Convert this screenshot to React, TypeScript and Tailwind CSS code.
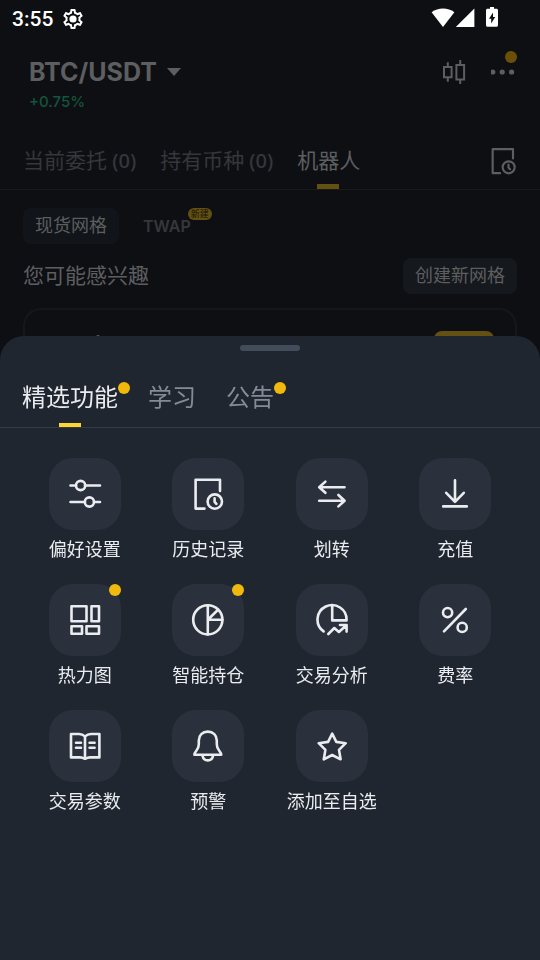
import { useState, type ReactNode } from 'react';

interface Feature {
  label: string;
  icon: ReactNode;
  isNew?: boolean;
}

interface SheetTab {
  label: string;
  isNew?: boolean;
}

interface OrderTab {
  label: string;
  count?: number;
}

function Glyph({ children, className = 'size-9' }: { children: ReactNode; className?: string }) {
  return (
    <svg
      viewBox="0 0 36 36"
      className={className}
      fill="none"
      stroke="currentColor"
      strokeWidth="2.6"
      strokeLinecap="round"
      strokeLinejoin="round"
      aria-hidden="true"
    >
      {children}
    </svg>
  );
}

const historyPaths = (
  <>
    <path d="M14.5 32.6H5.6V3.8H30V15" />
    <circle cx="24.8" cy="25.6" r="7.2" />
    <path d="M24.6 22.4v3.4l1.8 2" />
  </>
);

const features: Feature[] = [
  {
    label: '偏好设置',
    icon: (
      <>
        <path d="M3.5 9.5H9M18 9.5h15M3.5 26H18M27 26h6" />
        <circle cx="13.6" cy="9.5" r="4.6" />
        <circle cx="22.4" cy="26" r="4.6" />
      </>
    ),
  },
  { label: '历史记录', icon: historyPaths },
  {
    label: '划转',
    icon: <path d="M30.5 11.2H5.2M11.4 5.6l-6.2 5.6 6.2 5.6M5.2 24.7h25.3M24.4 19l6.2 5.7-6.2 5.7" />,
  },
  {
    label: '充值',
    icon: <path d="M18 4.2v21.6M9.2 16.8l8.8 9 8.8-9M6.2 30.4h23.6" />,
  },
  {
    label: '热力图',
    isNew: true,
    icon: <path d="M4.5 4.3h15v15h-15zM24.5 4.3H32v15h-7.5zM4.5 24.3H15v7.5H4.5zM19.5 24.3H32v7.5H19.5z" />,
  },
  {
    label: '智能持仓',
    isNew: true,
    icon: (
      <>
        <circle cx="17.8" cy="17.8" r="14.6" />
        <path d="M17.8 3.2v29.2M17.8 17.8h14.6M18.4 17.2l9.6-9.4" />
      </>
    ),
  },
  {
    label: '交易分析',
    icon: (
      <>
        <path d="M9.6 29.4A14.5 14.5 0 1 1 32.5 18.4H18.2V3.6" />
        <path d="M14.3 32l6-6 4.6 4L32.4 23.2M26 23h6.6v6.6" />
      </>
    ),
  },
  {
    label: '费率',
    icon: (
      <>
        <circle cx="10.6" cy="10.6" r="4.6" />
        <circle cx="25.2" cy="25.4" r="4.6" />
        <path d="M28.8 7L7 29.4" />
      </>
    ),
  },
  {
    label: '交易参数',
    icon: (
      <>
        <path d="M18 8.4C16 6.6 14.6 6 12 6H4v23.4h9c2 0 3.4.6 5 1.4 1.6-.8 3-1.4 5-1.4h9.4V6H24c-2.6 0-4 .6-6 2.4z" />
        <path d="M18 8.4v22.4M9 14.8h5M9 19.8h5M22.6 14.8h5M22.6 19.8h5" />
      </>
    ),
  },
  {
    label: '预警',
    icon: (
      <>
        <path d="M17.8 3.6c-5.4 0-9 3.8-9 8.8v3.8c0 3.2-.8 4.8-2.6 6.8-1 1.2-1.8 2-1.8 3.8h26.8c0-1.800-.8-2.600-1.800-3.800-1.800-2-2.600-3.600-2.600-6.800v-3.800c0-5-3.600-8.800-9-8.800z" />
        <path d="M12.6 28c.6 2.8 2.4 4.4 5.2 4.4s4.6-1.6 5.2-4.4" />
      </>
    ),
  },
  {
    label: '添加至自选',
    icon: <path d="M18.2 5.6l4.1 8.3 9.4 1.3-6.7 6.7 1.6 9.4-8.4-4.3-8.4 4.3 1.6-9.4-6.7-6.7 9.4-1.3z" />,
  },
];

const sheetTabs: SheetTab[] = [
  { label: '精选功能', isNew: true },
  { label: '学习' },
  { label: '公告', isNew: true },
];

const orderTabs: OrderTab[] = [
  { label: '当前委托', count: 0 },
  { label: '持有币种', count: 0 },
  { label: '机器人' },
];

function StatusBar() {
  return (
    <div className="flex h-9 items-center justify-between pl-3 pr-[42px] text-white">
      <div className="flex items-center gap-2 pt-0.5">
        <span className="font-[Roboto] text-[21px] font-medium leading-6">3:55</span>
        <svg viewBox="0 0 24 24" className="size-6" fill="currentColor" aria-hidden="true">
          <path
            d="M19.43 12.98c.04-.32.07-.64.07-.98s-.03-.66-.07-.98l2.11-1.65c.19-.15.24-.42.12-.64l-2-3.46c-.12-.22-.39-.3-.61-.22l-2.49 1c-.52-.4-1.08-.73-1.69-.98l-.38-2.65A.488.488 0 0 0 14 2h-4c-.25 0-.46.18-.49.42l-.38 2.65c-.61.25-1.17.59-1.69.98l-2.49-1c-.23-.09-.49 0-.61.22l-2 3.46c-.13.22-.07.49.12.64l2.11 1.65c-.04.32-.07.65-.07.98s.03.66.07.98l-2.11 1.65c-.19.15-.24.42-.12.64l2 3.46c.12.22.39.3.61.22l2.49-1c.52.4 1.08.73 1.69.98l.38 2.65c.03.24.24.42.49.42h4c.25 0 .46-.18.49-.42l.38-2.65c.61-.25 1.17-.59 1.69-.98l2.49 1c.23.09.49 0 .61-.22l2-3.46c.12-.22.07-.49-.12-.64l-2.11-1.65zm-1.98-1.71c.04.31.05.52.05.73s-.02.43-.05.73l-.14 1.13.89.7 1.08.84-.7 1.21-1.27-.51-1.04-.42-.9.68c-.43.32-.84.56-1.25.73l-1.06.43-.16 1.13-.2 1.35h-1.4l-.35-2.48-1.06-.43c-.43-.18-.83-.41-1.23-.71l-.91-.7-1.06.43-1.27.51-.7-1.21 1.08-.84.89-.7-.14-1.13c-.03-.31-.05-.54-.05-.74s.02-.43.05-.73l.14-1.13-.89-.7-1.08-.84.7-1.21 1.27.51 1.04.42.9-.68c.43-.32.84-.56 1.25-.73l1.06-.43.16-1.13.2-1.35h1.39l.35 2.48 1.06.43c.43.18.83.41 1.23.71l.91.7 1.06-.43 1.27-.51.7 1.21-1.07.85-.89.7.14 1.13z"
            fillRule="evenodd"
          />
          <circle cx="12" cy="12" r="3.6" />
        </svg>
      </div>
      <div className="flex items-center">
        <svg viewBox="0 0 24 20" className="h-5 w-6" fill="currentColor" aria-hidden="true">
          <path d="M.6 4.2C4 1.6 7.8.4 12 .4s8 1.2 11.4 3.8L12 19z" />
        </svg>
        <svg viewBox="0 0 20 20" className="size-5" fill="currentColor" aria-hidden="true">
          <path d="M19.4.4V19H.8z" />
        </svg>
        <svg viewBox="0 0 12 21" className="mb-px ml-[11px] h-[21px] w-3" fill="currentColor" aria-hidden="true">
          <path
            fillRule="evenodd"
            d="M4 0h4v1.8h2.5c.8 0 1.5.7 1.5 1.5v15c0 .8-.7 1.5-1.500 1.500h-9c-.8 0-1.500-.7-1.500-1.500v-15c0-.8.7-1.500 1.500-1.500H4zM7 5.500L3 11.800h2.200V16.500L9.200 10H7z"
          />
        </svg>
      </div>
    </div>
  );
}

function TradePage() {
  return (
    <main className="text-[#5d5e60]">
      <header className="flex items-start justify-between pl-[29px] pr-[23px] pt-5">
        <div>
          <h1>
            <button type="button" className="flex items-center gap-2.5 text-[25px] font-bold leading-8">
              BTC/USDT
              <svg viewBox="0 0 14 8" className="h-2 w-3.5" fill="currentColor" aria-hidden="true">
                <path d="M0 0h14L7 8z" />
              </svg>
            </button>
          </h1>
          <p className="text-[15px] font-medium leading-7 text-[#12563c]">+0.75%</p>
        </div>
        <div className="flex items-center gap-6 pt-1">
          <button type="button" aria-label="K线图">
            <svg viewBox="0 0 24 24" className="size-6" fill="none" stroke="currentColor" strokeWidth="2" aria-hidden="true">
              <path d="M1 7h7.600v10.200H1zM4.800 2.300V7M4.800 17.200v4.600M13.400 5h7.700v14.600h-7.700zM17.200 0v5M17.200 19.600V24" />
            </svg>
          </button>
          <button type="button" aria-label="更多" className="relative">
            <svg viewBox="0 0 26 24" className="h-6 w-[26px]" fill="currentColor" aria-hidden="true">
              <circle cx="1.8" cy="12" r="2.6" />
              <circle cx="11.2" cy="12" r="2.6" />
              <circle cx="20.600" cy="12" r="2.6" />
            </svg>
            <span className="absolute -top-[9px] right-0 size-3 rounded-full bg-[#6c4f07]" />
          </button>
        </div>
      </header>

      <div className="mt-4 flex items-center justify-between border-b border-[#17191d] pl-[23px] pr-[22px]">
        <nav className="flex gap-6">
          {orderTabs.map((tab, i) => {
            const active = i === 2;
            return (
              <button
                key={tab.label}
                type="button"
                className={`relative h-[57px] text-[21px] leading-8 ${active ? '' : 'text-[#35373b]'}`}
              >
                {tab.label}
                {tab.count !== undefined && (
                  <span className="font-['Noto_Sans'] text-xl font-medium"> ({tab.count})</span>
                )}
                {active && <span className="absolute bottom-0 left-5 h-[5px] w-[22px] bg-[#655013]" />}
              </button>
            );
          })}
        </nav>
        <button type="button" aria-label="历史记录">
          <Glyph className="size-[30px]">{historyPaths}</Glyph>
        </button>
      </div>

      <div className="px-[23px] pt-[18px]">
        <div className="flex gap-6">
          <button type="button" className="h-9 rounded-lg bg-[#111418] px-3 text-lg leading-6">
            现货网格
          </button>
          <button type="button" className="relative h-9 text-base font-semibold leading-6 text-[#35373b]">
            TWAP
            <span className="absolute -right-[21px] top-0 flex h-3 w-6 items-center justify-center rounded-full bg-[#655013] text-[9px] font-normal text-[#17140b]">
              新建
            </span>
          </button>
        </div>

        <div className="mt-3.5 flex items-center justify-between">
          <h2 className="text-[21px] leading-8">您可能感兴趣</h2>
          <button type="button" className="h-9 rounded-lg bg-[#15181c] px-3 text-lg leading-6">
            创建新网格
          </button>
        </div>

        <div className="mt-3.5 flex h-40 items-start justify-between rounded-[18px] border-2 border-[#15171b] px-[21px] pt-[21px]">
          <span className="ml-[50px] mt-1 h-1 w-1 rounded-full bg-current" />
          <span className="h-9 w-[60px] rounded-lg bg-[#655013]" />
        </div>
      </div>
    </main>
  );
}

function FeatureSheet() {
  const [current, setCurrent] = useState(0);

  return (
    <section
      role="dialog"
      aria-label="精选功能"
      className="fixed inset-x-0 bottom-0 h-[65vh] overflow-y-auto rounded-t-3xl bg-[#202630] text-[#eaecef]"
    >
      <div className="mx-auto mt-[9px] h-1.5 w-15 rounded-full bg-[#434c5a]" />

      <div role="tablist" className="mt-6 flex gap-[30px] border-b border-[#333b47] px-[22px]">
        {sheetTabs.map((tab, i) => (
          <button
            key={tab.label}
            type="button"
            role="tab"
            aria-selected={i === current}
            onClick={() => setCurrent(i)}
            className={`relative h-[52px] pb-1.5 text-2xl leading-9 ${i === current ? '' : 'text-[#848a98]'}`}
          >
            {tab.label}
            {tab.isNew && <span className="absolute -right-3 top-[7px] size-3 rounded-full bg-[#f0b90b]" />}
            {i === current && (
              <span className="absolute bottom-0 left-1/2 h-1 w-[22px] -translate-x-1/2 bg-[#fcd535]" />
            )}
          </button>
        ))}
      </div>

      <div className="grid grid-cols-4 gap-y-[22px] px-[23px] pt-[30px]">
        {features.map((feature) => (
          <button key={feature.label} type="button" className="flex flex-col items-center">
            <span className="relative flex size-18 items-center justify-center rounded-3xl bg-[#2b313c]">
              <Glyph>{feature.icon}</Glyph>
              {feature.isNew && <span className="absolute right-0 top-0 size-3 rounded-full bg-[#f0b90b]" />}
            </span>
            <span className="mt-2 whitespace-nowrap text-lg leading-6">{feature.label}</span>
          </button>
        ))}
      </div>
    </section>
  );
}

export default function App() {
  return (
    <div className="h-screen overflow-hidden bg-[#0e0f13] font-[Inter,'Noto_Sans_CJK_SC',sans-serif]">
      <StatusBar />
      <TradePage />
      <FeatureSheet />
    </div>
  );
}
